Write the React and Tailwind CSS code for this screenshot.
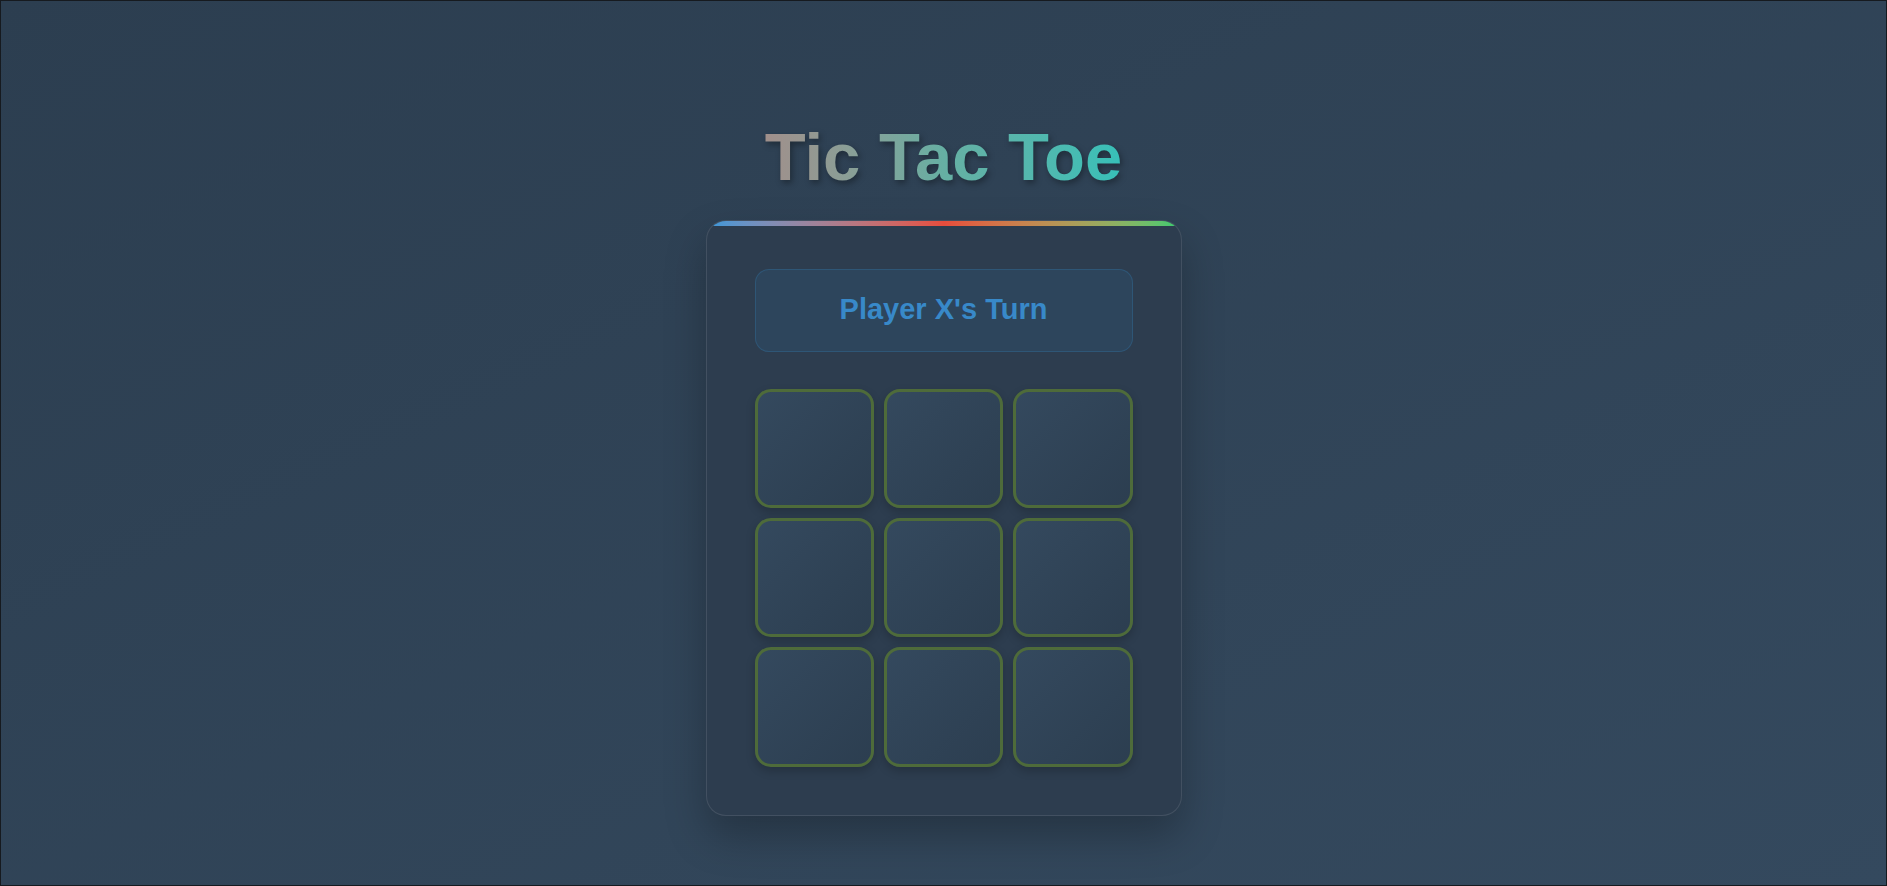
export default function App() {
  const cells = Array.from({ length: 9 });
  return (
    <div
      className="w-full min-h-screen h-[886px] border border-[#161a1f] bg-linear-to-br from-[#2c3e50] to-[#34495e] flex flex-col items-center pt-[106px] overflow-hidden"
      style={{ fontFamily: '"Liberation Sans", Arial, sans-serif' }}
    >
      <h1 className="inline-block text-[67px] font-bold leading-normal drop-shadow-[2px_3px_3px_rgba(0,0,0,0.35)] mb-[12px]">
        <span className="bg-linear-to-r from-[#a08f8b] via-[#66afa3] to-[#36c0b8] bg-clip-text text-transparent">
          Tic Tac Toe
        </span>
      </h1>
      <div className="relative w-[476px] rounded-[20px] border border-white/10 bg-[#2d3d4f] p-12 overflow-hidden shadow-[0_20px_40px_rgba(0,0,0,0.25)]">
        <div className="absolute top-0 left-0 right-0 h-[5px] bg-linear-to-r from-[#3498db] via-[#e74c3c] to-[#2ecc71]" />
        <div className="h-[83px] rounded-[14px] border border-[#3498db]/20 bg-[#3498db]/10 flex items-center justify-center">
          <span className="text-[29px] font-bold text-[#3889c9]">Player X's Turn</span>
        </div>
        <div className="mt-[37px] grid grid-cols-3 gap-[10px]">
          {cells.map((_, i) => (
            <div
              key={i}
              className="aspect-square rounded-[16px] border-[3px] border-[#4e6b3a] bg-linear-to-br from-[#34495e] to-[#2c3e50] shadow-[0_4px_10px_rgba(0,0,0,0.2)]"
            />
          ))}
        </div>
      </div>
    </div>
  );
}
